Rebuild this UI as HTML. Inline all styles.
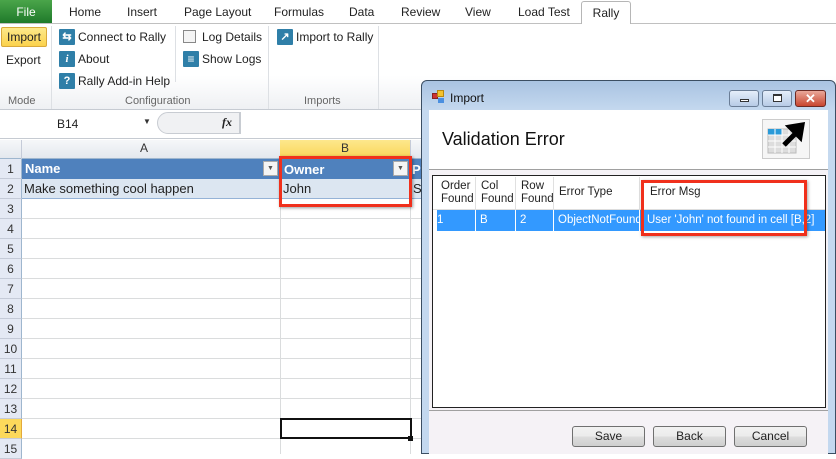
<!DOCTYPE html>
<html><head><meta charset="utf-8"><style>
*{margin:0;padding:0;box-sizing:border-box}
body{width:836px;height:454px;overflow:hidden;background:#fff;font-family:"Liberation Sans",sans-serif;font-size:12px;color:#222;position:relative}
.a{position:absolute}
.tab{position:absolute;top:5px;font-size:12px;color:#222}
.ic{position:absolute;width:16px;height:16px;background:#2f7fa8;border-radius:1px;color:#fff;font-size:11px;text-align:center;line-height:16px;font-weight:bold}
.rl{position:absolute;font-size:12px;color:#222}
.gl{position:absolute;top:95px;font-size:11px;color:#666}
.rh{position:absolute;left:0;width:22px;height:20px;background:#e4e9f4;border-bottom:1px solid #c5cbd8;border-right:1px solid #9eb6ce;font-size:12px;color:#333;text-align:center;line-height:20px}
.hl{position:absolute;left:22px;width:399px;height:1px;background:#dadcdd}
.btn{position:absolute;top:426px;width:73px;height:21px;border:1px solid #707070;border-radius:3px;background:linear-gradient(#f2f2f2,#ebebeb 50%,#dddddd 51%,#cfcfcf);text-align:center;line-height:19px;font-size:12px}
.th{position:absolute;top:177px;height:33px;border-right:1px solid #e0e0e0;font-size:11.5px;line-height:13px;padding:3px 0 0 5px;color:#222}
.td{position:absolute;top:210px;height:21px;border-right:1px solid #fff;color:#fff;font-size:11.5px;line-height:20px;padding-left:4px;white-space:nowrap;overflow:hidden}
</style></head><body>
<div class="a" style="left:0;top:0;width:836px;height:24px;background:#fff;border-bottom:1px solid #c0c0c0"></div>
<div class="a" style="left:0;top:0;width:52px;height:23px;background:linear-gradient(#4aa54a,#1f7a2a);color:#fff;text-align:center;line-height:24px;font-size:12px">File</div>
<div class="tab" style="left:69px">Home</div>
<div class="tab" style="left:127px">Insert</div>
<div class="tab" style="left:184px">Page Layout</div>
<div class="tab" style="left:274px">Formulas</div>
<div class="tab" style="left:349px">Data</div>
<div class="tab" style="left:401px">Review</div>
<div class="tab" style="left:465px">View</div>
<div class="tab" style="left:518px">Load Test</div>
<div class="a" style="left:581px;top:1px;width:50px;height:24px;background:#fff;border:1px solid #b6b6b6;border-bottom:none;border-radius:3px 3px 0 0;text-align:center;line-height:22px">Rally</div>
<div class="a" style="left:0;top:24px;width:836px;height:86px;background:linear-gradient(#fff,#fff 60%,#eef0f3)"></div>
<div class="a" style="left:1px;top:27px;width:46px;height:20px;background:linear-gradient(#fde98a,#fbd24c);border:1px solid #d9a93a;border-radius:2px;text-align:center;line-height:18px">Import</div>
<div class="rl" style="left:6px;top:53px">Export</div>
<div class="a" style="left:51px;top:26px;width:1px;height:83px;background:#dde0e4"></div>
<div class="ic" style="left:59px;top:29px">⇆</div><div class="rl" style="left:78px;top:30px">Connect to Rally</div>
<div class="ic" style="left:59px;top:51px;font-style:italic;font-family:'Liberation Serif'">i</div><div class="rl" style="left:78px;top:52px">About</div>
<div class="ic" style="left:59px;top:73px">?</div><div class="rl" style="left:78px;top:74px">Rally Add-in Help</div>
<div class="a" style="left:175px;top:26px;width:1px;height:56px;background:#dde0e4"></div>
<div class="a" style="left:183px;top:30px;width:13px;height:13px;border:1px solid #888;background:#f4f4f4"></div><div class="rl" style="left:202px;top:30px">Log Details</div>
<div class="ic" style="left:183px;top:51px;font-size:12px">≡</div><div class="rl" style="left:202px;top:52px">Show Logs</div>
<div class="a" style="left:268px;top:26px;width:1px;height:83px;background:#dde0e4"></div>
<div class="ic" style="left:277px;top:29px">↗</div><div class="rl" style="left:296px;top:30px">Import to Rally</div>
<div class="a" style="left:378px;top:26px;width:1px;height:83px;background:#dde0e4"></div>
<div class="gl" style="left:8px">Mode</div>
<div class="gl" style="left:125px">Configuration</div>
<div class="gl" style="left:304px">Imports</div>
<div class="a" style="left:0;top:109px;width:836px;height:1px;background:#c6cbd2"></div>
<div class="a" style="left:0;top:110px;width:836px;height:29px;background:#fff;border-bottom:1px solid #c6cbd2"></div>
<div class="a" style="left:57px;top:117px;font-size:12px">B14</div>
<div class="a" style="left:143px;top:117px;font-size:8px;color:#333">▼</div>
<div class="a" style="left:157px;top:112px;width:83px;height:22px;background:#f0f1f3;border:1px solid #c8ccd2;border-radius:11px 0 0 11px"></div>
<div class="a" style="left:222px;top:115px;font-family:'Liberation Serif';font-style:italic;font-weight:bold;font-size:12px">fx</div>
<div class="a" style="left:240px;top:112px;width:1px;height:22px;background:#c8ccd2"></div>
<div class="a" style="left:0;top:140px;width:421px;height:19px;background:linear-gradient(#f6f7f9,#e4e8ee);border-bottom:1px solid #9eb6ce"></div>
<div class="a" style="left:21px;top:140px;width:1px;height:19px;background:#c5cbd8"></div>
<div class="a" style="left:140px;top:141px;font-size:12px;color:#333">A</div>
<div class="a" style="left:280px;top:140px;width:131px;height:19px;background:linear-gradient(#fde88c,#f9d559);border-bottom:1px solid #e3a93b"></div>
<div class="a" style="left:341px;top:141px;font-size:12px;color:#333">B</div>
<div class="a" style="left:410px;top:140px;width:1px;height:19px;background:#c5cbd8"></div>
<div class="rh" style="top:159px">1</div><div class="rh" style="top:179px">2</div><div class="rh" style="top:199px">3</div><div class="rh" style="top:219px">4</div><div class="rh" style="top:239px">5</div><div class="rh" style="top:259px">6</div><div class="rh" style="top:279px">7</div><div class="rh" style="top:299px">8</div><div class="rh" style="top:319px">9</div><div class="rh" style="top:339px">10</div><div class="rh" style="top:359px">11</div><div class="rh" style="top:379px">12</div><div class="rh" style="top:399px">13</div>
<div class="rh" style="top:419px;background:#fcd95b;border-right-color:#e3a93b">14</div><div class="rh" style="top:439px">15</div>
<div class="hl" style="top:218px"></div><div class="hl" style="top:238px"></div><div class="hl" style="top:258px"></div><div class="hl" style="top:278px"></div><div class="hl" style="top:298px"></div><div class="hl" style="top:318px"></div><div class="hl" style="top:338px"></div><div class="hl" style="top:358px"></div><div class="hl" style="top:378px"></div><div class="hl" style="top:398px"></div><div class="hl" style="top:418px"></div><div class="hl" style="top:438px"></div>
<div class="a" style="left:280px;top:199px;width:1px;height:255px;background:#dadcdd"></div>
<div class="a" style="left:410px;top:199px;width:1px;height:255px;background:#dadcdd"></div>
<div class="a" style="left:22px;top:159px;width:399px;height:20px;background:#4f81bd;color:#fff;font-weight:bold;font-size:13px;line-height:20px;padding-left:3px">Name</div>
<div class="a" style="left:284px;top:160px;font-weight:bold;font-size:13px;color:#fff;line-height:19px">Owner</div>
<div class="a" style="left:412px;top:160px;font-weight:bold;font-size:13px;color:#fff;line-height:19px">P</div>
<div class="a" style="left:263px;top:161px;width:15px;height:15px;background:#f4f4f4;border:1px solid #aaa;font-size:7px;text-align:center;line-height:14px;color:#555">▼</div>
<div class="a" style="left:393px;top:161px;width:15px;height:15px;background:#f4f4f4;border:1px solid #aaa;font-size:7px;text-align:center;line-height:14px;color:#555">▼</div>
<div class="a" style="left:22px;top:179px;width:399px;height:20px;background:#dce6f1;border-bottom:1px solid #95b3d7;font-size:13px;line-height:19px;padding-left:2px">Make something cool happen</div>
<div class="a" style="left:280px;top:179px;width:1px;height:20px;background:#fff"></div>
<div class="a" style="left:283px;top:179px;font-size:13px;line-height:19px">John</div>
<div class="a" style="left:413px;top:179px;font-size:13px;line-height:19px">S</div>
<div class="a" style="left:279px;top:156px;width:133px;height:51px;border:3px solid #f0301c;box-shadow:1px 1px 3px rgba(0,0,0,.4)"></div>
<div class="a" style="left:280px;top:418px;width:132px;height:21px;border:2px solid #111"></div>
<div class="a" style="left:408px;top:436px;width:5px;height:5px;background:#111"></div>
<div class="a" style="left:421px;top:80px;width:415px;height:374px;background:linear-gradient(#a9c3e2,#c5d9ef 30px,#c3d8ef);border:1px solid #3b4e63;border-radius:6px 6px 0 0"></div>
<div class="a" style="left:432px;top:93px;width:6px;height:6px;background:#c33;border:1px solid #822"></div>
<div class="a" style="left:437px;top:90px;width:7px;height:7px;background:#f4c22d;border:1px solid #b8880e"></div>
<div class="a" style="left:438px;top:98px;width:6px;height:5px;background:#4a8fe0"></div>
<div class="a" style="left:450px;top:91px;font-size:12px;color:#111">Import</div>
<div class="a" style="left:729px;top:90px;width:30px;height:17px;border:1px solid #6a7d96;border-radius:3px;background:linear-gradient(#e5eefa,#b7cbe6)"><div class="a" style="left:10px;top:8px;width:9px;height:3px;border:1px solid #333;background:#fff"></div></div>
<div class="a" style="left:762px;top:90px;width:30px;height:17px;border:1px solid #6a7d96;border-radius:3px;background:linear-gradient(#e5eefa,#b7cbe6)"><div class="a" style="left:10px;top:3px;width:9px;height:8px;border:1px solid #333;border-top-width:2px;background:#fff"></div></div>
<div class="a" style="left:795px;top:90px;width:31px;height:17px;border:1px solid #6b2a23;border-radius:3px;background:linear-gradient(#e9a89a,#c9462f);color:#fff;font-weight:bold;text-align:center;line-height:15px;font-size:13px">✕</div>
<div class="a" style="left:429px;top:110px;width:399px;height:344px;background:#f5f2f6"></div>
<div class="a" style="left:429px;top:110px;width:399px;height:60px;background:#fff;border-bottom:1px solid #a0a0a0"></div>
<div class="a" style="left:442px;top:129px;font-size:18px;color:#111">Validation Error</div>
<div class="a" style="left:762px;top:119px;width:48px;height:40px;border:1px solid #ccc;background:#f6f6f6"></div>
<svg class="a" style="left:764px;top:121px" width="44" height="36"><g stroke="#bbb" fill="#ddd"><rect x="4" y="8" width="28" height="24"/></g><rect x="4" y="8" width="14" height="6" fill="#2a9ad8"/><g stroke="#fff"><line x1="4" y1="14" x2="32" y2="14"/><line x1="4" y1="20" x2="32" y2="20"/><line x1="4" y1="26" x2="32" y2="26"/><line x1="11" y1="8" x2="11" y2="32"/><line x1="18" y1="8" x2="18" y2="32"/><line x1="25" y1="8" x2="25" y2="32"/></g><path d="M20 24 L36 8 M26 6 L38 4 L36 16 Z" stroke="#000" stroke-width="5" fill="#000"/></svg>
<div class="a" style="left:432px;top:175px;width:394px;height:233px;background:#fff;border:1px solid #222"></div>
<div class="a" style="left:433px;top:176px;width:392px;height:34px;background:#fff;border-bottom:1px solid #ddd"></div>
<div class="th" style="left:437px;width:39px;padding-left:4px">Order<br>Found</div>
<div class="th" style="left:476px;width:40px">Col<br>Found</div>
<div class="th" style="left:516px;width:38px">Row<br>Found</div>
<div class="th" style="left:554px;width:86px;padding-top:9px">Error Type</div>
<div class="th" style="left:640px;width:185px;padding-top:9px;padding-left:10px;border-right:none">Error Msg</div>
<div class="a" style="left:433px;top:210px;width:392px;height:21px;background:#3399ff"></div>
<div class="a" style="left:433px;top:210px;width:4px;height:21px;background:#fff"></div>
<div class="td" style="left:437px;width:39px;padding-left:0">1</div>
<div class="td" style="left:476px;width:40px">B</div>
<div class="td" style="left:516px;width:38px">2</div>
<div class="td" style="left:554px;width:86px">ObjectNotFound</div>
<div class="td" style="left:644px;width:181px;padding-left:3px;border-right:none">User 'John' not found in cell [B,2]</div>
<div class="a" style="left:641px;top:180px;width:166px;height:56px;border:3px solid #f0301c;box-shadow:1px 1px 3px rgba(0,0,0,.35)"></div>
<div class="a" style="left:429px;top:410px;width:399px;height:1px;background:#a0a0a0"></div>
<div class="btn" style="left:572px">Save</div>
<div class="btn" style="left:653px">Back</div>
<div class="btn" style="left:734px">Cancel</div>
</body></html>
